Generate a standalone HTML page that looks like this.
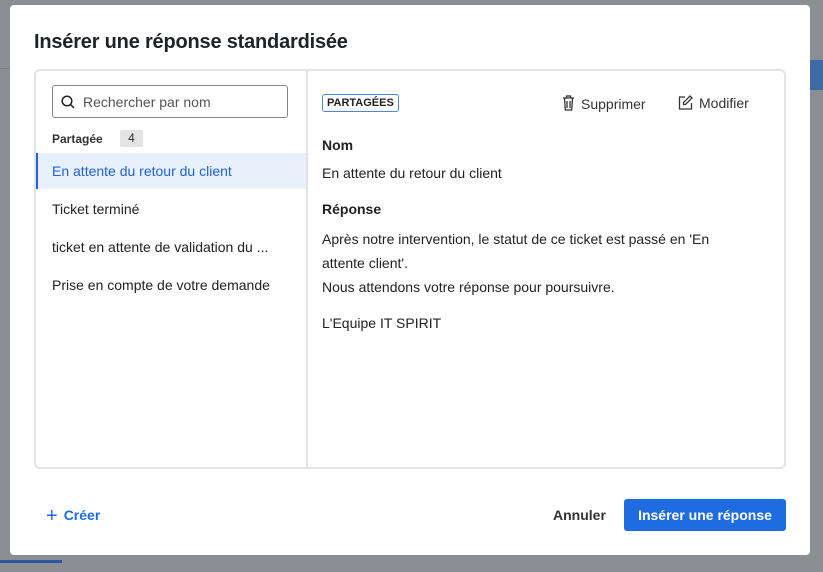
<!DOCTYPE html>
<html><head><meta charset="utf-8"><style>
*{box-sizing:border-box;margin:0;padding:0}
body{width:823px;height:572px;overflow:hidden;background:#8b8e93;font-family:"Liberation Sans",sans-serif;position:relative;color:#222}
.bgline{position:absolute;background:#7d8086}
.modal{position:absolute;left:10px;top:5px;width:800px;height:550px;background:#fff;border-radius:4px}
h1{position:absolute;left:24px;top:26px;font-size:20px;font-weight:bold;color:#1f2328;letter-spacing:-0.2px}
.panel{position:absolute;left:24px;top:64px;width:752px;height:400px;border:2px solid #e3e3e3;border-radius:6px}
.div{position:absolute;left:270px;top:0;bottom:0;width:2px;background:#e3e3e3}
.search{position:absolute;left:16px;top:14px;width:236px;height:33px;border:1px solid #888;border-radius:3px;font-size:14px;color:#555;padding:8px 0 0 30px}
.lbl{position:absolute;left:16px;top:61px;font-size:12px;font-weight:bold;color:#333}
.badge{position:absolute;left:84px;top:59px;width:23px;height:17px;background:#e4e4e4;border-radius:2px;font-size:12px;text-align:center;line-height:17px;color:#333}
.item{position:absolute;left:0;width:270px;height:36px;font-size:14px;padding:10px 0 0 16px;color:#222;white-space:nowrap}
.sel{background:#e8f0fc;color:#1d62d8;border-left:2px solid #1d62d8;padding-left:14px}
.tag{position:absolute;left:286px;top:23px;border:1px solid #4a86e0;border-radius:3px;font-size:11px;font-weight:bold;padding:2px 4px;color:#222}
.act{position:absolute;top:24px;font-size:14px;color:#333}
.r{position:absolute;left:286px;font-size:14px;color:#222}
.b{font-weight:bold}
.foot{position:absolute;font-size:14px}
.btn{position:absolute;left:614px;top:494px;width:162px;height:32px;background:#1f6ce0;color:#fff;border-radius:3px;font-size:14px;font-weight:bold;text-align:center;line-height:32px}
</style></head><body>
<div class="bgline" style="left:0;top:68px;width:10px;height:1px"></div>
<div style="position:absolute;left:810px;top:60px;width:13px;height:30px;background:#3f6aa8"></div>
<div style="position:absolute;left:0;top:560px;width:62px;height:3px;background:#2d55a0"></div>
<div class="modal">
<h1>Insérer une réponse standardisée</h1>
<div class="panel">
<div class="div"></div>
<div class="search"><svg style="position:absolute;left:8px;top:9px" width="14" height="14" viewBox="0 0 14 14"><circle cx="6" cy="6" r="4.8" fill="none" stroke="#222" stroke-width="1.5"/><path d="M9.5 9.5L13 13" stroke="#222" stroke-width="1.5"/></svg>Rechercher par nom</div>
<div class="lbl">Partagée</div><div class="badge">4</div>
<div class="item sel" style="top:82px">En attente du retour du client</div>
<div class="item" style="top:120px">Ticket terminé</div>
<div class="item" style="top:158px">ticket en attente de validation du ...</div>
<div class="item" style="top:196px">Prise en compte de votre demande</div>
<div class="tag">PARTAGÉES</div>
<div class="act" style="left:526px"><svg style="vertical-align:-2px;margin-right:6px" width="13" height="16" viewBox="0 0 13 16"><path d="M1 3h11M4.5 3V1h4v2M2.5 3l.8 12h6.4l.8-12M5 6v7M8 6v7" fill="none" stroke="#333" stroke-width="1.3"/></svg>Supprimer</div>
<div class="act" style="left:642px"><svg style="vertical-align:-2px;margin-right:6px" width="15" height="15" viewBox="0 0 15 15"><path d="M7 2H1.5v12h12V8M12 1l2 2-6.5 6.5H5.5v-2z" fill="none" stroke="#333" stroke-width="1.3"/></svg>Modifier</div>
<div class="r b" style="top:66px">Nom</div>
<div class="r" style="top:94px">En attente du retour du client</div>
<div class="r b" style="top:130px">Réponse</div>
<div class="r" style="top:156px;line-height:24px">Après notre intervention, le statut de ce ticket est passé en 'En<br>attente client'.<br>Nous attendons votre réponse pour poursuivre.</div>
<div class="r" style="top:244px">L'Equipe IT SPIRIT</div>
</div>
<div class="foot" style="left:36px;top:500px;color:#1f6ce0;font-weight:bold"><span style="font-size:20px;font-weight:normal;vertical-align:-2px;margin-right:6px">+</span>Créer</div>
<div class="foot" style="left:543px;top:502px;color:#333;font-weight:bold">Annuler</div>
<div class="btn">Insérer une réponse</div>
</div>
</body></html>
